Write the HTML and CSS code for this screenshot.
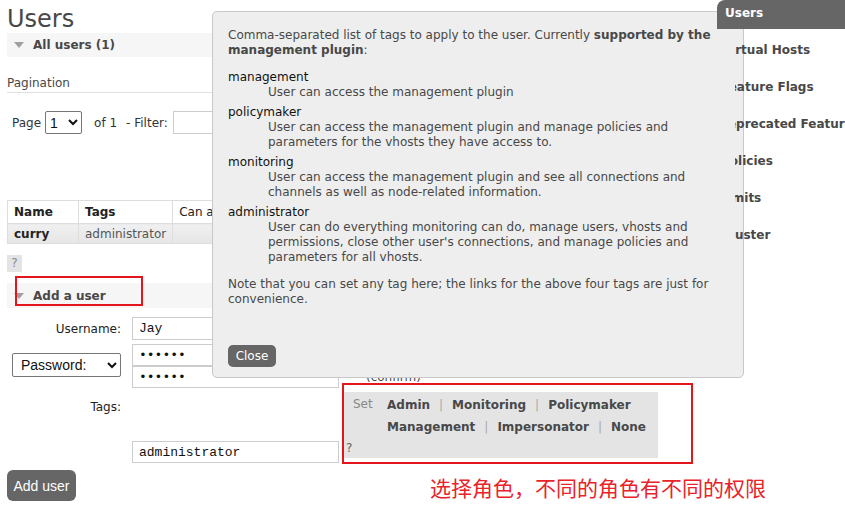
FILE: index.html
```html
<!DOCTYPE html>
<html>
<head>
<meta charset="utf-8">
<link rel="stylesheet" href="styles.css">
</head>
<body>
<div class="page">
  <main class="main">
    <h1 class="title">Users</h1>
    <div class="band"><span class="tri"></span>All users (1)</div>
    <h3 class="pag-title">Pagination</h3>
    <div class="pager">
      <span>Page</span>
      <select class="sel sel-page"><option>1</option></select>
      <span class="of">of 1</span>
      <span class="flt">- Filter:</span>
      <input class="filter" type="text">
    </div>
    <table class="list">
      <thead>
        <tr><th class="c1">Name</th><th class="c2">Tags</th><th class="c3">Can access virtual hosts</th><th class="c4">Has password</th></tr>
      </thead>
      <tbody>
        <tr><td class="c1 b">curry</td><td class="c2 tag">administrator</td><td class="c3"></td><td class="c4"></td></tr>
      </tbody>
    </table>
    <div class="qbox">?</div>
    <div class="band band-add"><span class="tri"></span>Add a user</div>
    <div class="form">
      <label class="lab">Username:</label>
      <div class="fld"><input class="inp" type="text" value="Jay"></div>

      <div class="lab lab-sel"><select class="sel sel-pw"><option>Password:</option></select></div>
      <div class="fld fld-pw">
        <input class="inp inp-pw" type="password" value="123456">
        <div class="pw2"><input class="inp inp-pw" type="password" value="123456"><span class="confirm">(confirm)</span></div>
      </div>

      <label class="lab lab-tags">Tags:</label>
      <div class="fld fld-tags">
        <input class="inp inp-tags" type="text" value="administrator">
        <div class="setbox">
          <div class="setrow">
            <span class="setlbl">Set</span>
            <div class="setlinks">
              <div><b>Admin</b><i>|</i><b>Monitoring</b><i>|</i><b>Policymaker</b></div>
              <div><b>Management</b><i>|</i><b>Impersonator</b><i>|</i><b>None</b></div>
            </div>
          </div>
          <div class="setq">?</div>
        </div>
      </div>
    </div>
    <button class="btn btn-add" type="button">Add user</button>
  </main>

  <nav class="nav">
    <div class="nav-active">Users</div>
    <ul class="nav-list">
      <li><span class="cut c-v">Virtual Hosts</span></li>
      <li><span class="cut c-f">Feature Flags</span></li>
      <li><span class="cut c-d">Deprecated Features</span></li>
      <li><span class="cut c-p">Policies</span></li>
      <li><span class="cut c-l">Limits</span></li>
      <li><span class="cut c-c">Cluster</span></li>
    </ul>
  </nav>

  <div class="modal">
    <p class="m-intro">Comma-separated list of tags to apply to the user. Currently <b>supported by the management plugin</b>:</p>
    <dl class="m-list">
      <dt>management</dt>
      <dd>User can access the management plugin</dd>
      <dt>policymaker</dt>
      <dd>User can access the management plugin and manage policies and parameters for the vhosts they have access to.</dd>
      <dt>monitoring</dt>
      <dd>User can access the management plugin and see all connections and channels as well as node-related information.</dd>
      <dt>administrator</dt>
      <dd>User can do everything monitoring can do, manage users, vhosts and permissions, close other user's connections, and manage policies and parameters for all vhosts.</dd>
    </dl>
    <p class="m-note">Note that you can set any tag here; the links for the above four tags are just for convenience.</p>
    <button class="btn btn-close" type="button">Close</button>
  </div>

  <div class="mark mark-add"></div>
  <div class="mark mark-tags"></div>
  <div class="note-cn">选择角色，不同的角色有不同的权限</div>
</div>
</body>
</html>
```

FILE: styles.css
```css
* { box-sizing: border-box; }
html, body { margin: 0; padding: 0; background: #fff; }
body {
  font-family: "DejaVu Sans", Verdana, sans-serif;
  font-size: 12px;
  color: #484848;
}
.page {
  position: relative;
  width: 845px;
  height: 509px;
  overflow: hidden;
  display: flex;
  align-items: flex-start;
}
.main {
  width: 717px;
  flex: none;
  padding-left: 7px;
}
.title {
  margin: 5px 0 0;
  font-size: 24px;
  line-height: 28px;
  font-weight: normal;
  color: #484848;
}
.band {
  height: 24px;
  width: 690px;
  background: #f6f6f6;
  display: flex;
  align-items: center;
  font-weight: bold;
  font-size: 12px;
  color: #484848;
}
.tri {
  width: 0; height: 0;
  border-left: 5px solid transparent;
  border-right: 5px solid transparent;
  border-top: 6px solid #a0a0a0;
  margin: 0 9px 0 7px;
}
.pag-title {
  margin: 19px 0 0;
  font-size: 12px;
  font-weight: normal;
  line-height: 15px;
  padding-bottom: 1px;
  border-bottom: 1px solid #e0e0e0;
  width: 690px;
}
.pager {
  margin-top: 18px;
  height: 23px;
  display: flex;
  align-items: center;
  padding-left: 5px;
  color: #333;
}
.sel {
  font-family: "Liberation Sans", Arial, sans-serif;
  font-size: 14px;
  color: #111;
  background: #fff;
  border: 1px solid #767676;
  border-radius: 2px;
}
.sel-page { width: 37px; height: 23px; margin-left: 4px; }
.of { margin-left: 12px; }
.flt { margin-left: 9px; }
.filter {
  margin-left: 5px;
  width: 160px;
  height: 23px;
  border: 1px solid #ccc;
}
.list {
  margin-top: 66px;
  border-collapse: collapse;
  width: 600px;
}
.list th, .list td {
  border: 1px solid #ddd;
  text-align: left;
  padding: 0 6px;
  font-size: 12px;
  white-space: nowrap;
}
.list th { height: 23px; font-weight: bold; color: #222; background: #fff; }
.list th.c3 { font-weight: normal; color: #222; }
.list td { height: 20px; background: linear-gradient(#f0f0f0, #e6e6e6); }
.list .c1 { width: 71px; }
.list .c2 { width: 90px; }
.list td.b { font-weight: bold; color: #222; }
.list td.tag { color: #555; }
.qbox {
  margin-top: 11px;
  width: 15px;
  height: 17px;
  background: #e4e4e4;
  color: #888;
  text-align: center;
  line-height: 17px;
}
.band-add { margin-top: 11px; height: 25px; }
.form {
  margin-top: 9px;
  display: grid;
  grid-template-columns: 114px 1fr;
  column-gap: 11px;
  row-gap: 4px;
}
.lab {
  text-align: right;
  align-self: center;
  color: #222;
}
.lab-sel { display: flex; justify-content: flex-end; margin-bottom: 2px; }
.sel-pw { width: 109px; height: 24px; padding-left: 4px; }
.lab-tags { align-self: start; padding-top: 8px; line-height: 15px; }
.fld { display: flex; flex-direction: column; }
.inp {
  width: 207px;
  height: 23px;
  border: 1px solid #ccc;
  padding: 0 6px;
  font-family: "Liberation Mono", "Courier New", monospace;
  font-size: 13px;
  color: #111;
  background: #fff;
}
.inp-pw { height: 22px; }
.pw2 { display: flex; align-items: center; }
.confirm { margin-left: 27px; color: #484848; }
.fld-tags { flex-direction: row; align-items: flex-start; }
.inp-tags { margin-top: 49px; height: 22px; }
.setbox {
  margin-left: 4px;
  width: 315px;
  height: 66px;
  background: #e4e4e4;
  padding-top: 2px;
}
.setrow { display: flex; }
.setlbl { margin-left: 10px; width: 34px; line-height: 20px; color: #888; }
.setlinks div { line-height: 22px; }
.setlinks b { color: #484848; }
.setlinks i { font-style: normal; color: #aaa; margin: 0 9px; }
.setq { margin-left: 3px; line-height: 21px; color: #666; }
.btn {
  border: none;
  background: #666;
  color: #fff;
  cursor: pointer;
}
.btn-add {
  margin-top: 7px;
  width: 69px;
  height: 31px;
  border-radius: 6px;
  font-family: "Liberation Sans", Arial, sans-serif;
  font-size: 14px;
  padding: 0;
}
.nav {
  position: relative;
  z-index: 30;
  width: 128px;
  flex: none;
}
.nav-active {
  height: 29px;
  background: #666;
  color: #fff;
  font-weight: bold;
  padding: 6px 0 0 8px;
  line-height: 14px;
  border-top-left-radius: 8px;
}
.nav-list {
  list-style: none;
  margin: 3px 0 0;
  padding: 0;
}
.nav-list li {
  height: 37px;
  line-height: 37px;
  margin-left: 18px;
  overflow: hidden;
  white-space: nowrap;
  font-weight: bold;
  color: #484848;
}
.cut { display: inline-block; margin-left: -13px; }
.c-f { margin-left: -14px; }
.c-d { margin-left: -17px; }
.c-p { margin-left: -14px; }
.c-l { margin-left: -15px; }
.c-c { margin-left: -13px; }
.modal {
  position: absolute;
  z-index: 20;
  left: 212px;
  top: 11px;
  width: 532px;
  height: 367px;
  background: #eeeeee;
  border: 1px solid #c8c8c8;
  border-radius: 5px;
  padding: 16px 15px 0 15px;
  line-height: 15px;
}
.m-intro { margin: 0; }
.m-intro b { color: #484848; }
.m-list { margin: 12px 0 0; }
.m-list dt { color: #111; }
.m-list dd { margin: 0 0 5px 40px; }
.m-list dd:last-child { margin-bottom: 0; }
.m-note { margin: 12px 0 0; }
.btn-close {
  margin-top: 38px;
  width: 48px;
  height: 22px;
  border-radius: 5px;
  font-family: "DejaVu Sans", Verdana, sans-serif;
  font-size: 12px;
  padding: 0;
}
.mark {
  position: absolute;
  z-index: 40;
  border: 2px solid #e3161e;
}
.mark-add { left: 15px; top: 276px; width: 128px; height: 30px; }
.mark-tags { left: 342px; top: 383px; width: 351px; height: 81px; }
.note-cn {
  position: absolute;
  z-index: 40;
  left: 430px;
  top: 474px;
  font-family: "Noto Sans CJK SC", sans-serif;
  font-size: 21px;
  line-height: 26px;
  color: #e8232a;
  white-space: nowrap;
}
```
